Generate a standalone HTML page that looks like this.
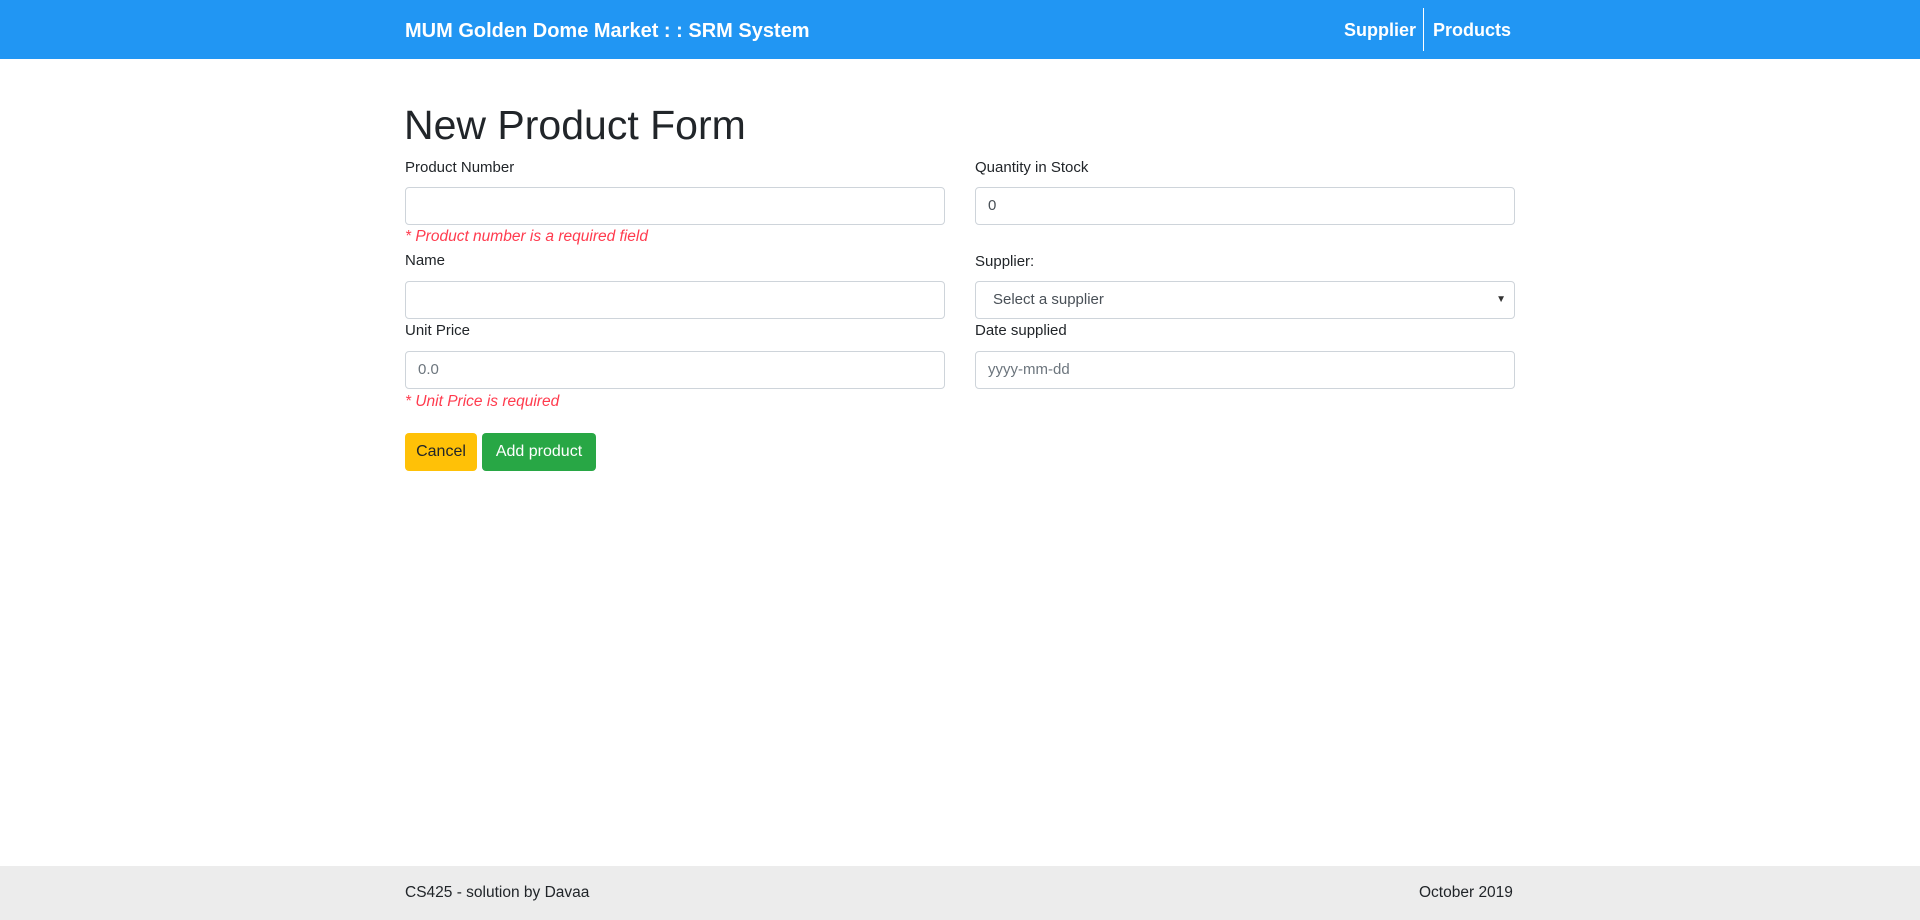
<!DOCTYPE html>
<html><head><meta charset="utf-8"><style>
*{box-sizing:border-box;margin:0;padding:0}
body{width:1920px;height:920px;position:relative;background:#fff;font-family:"Liberation Sans",sans-serif;color:#212529;font-size:16px;overflow:hidden}
.hdr{position:absolute;left:0;top:0;width:1920px;height:59px;background:#2196f3}
.a{position:absolute;white-space:nowrap}
.brand{left:405px;top:20px;color:#fff;font-weight:bold;font-size:20px}
.nav{top:20px;color:#fff;font-weight:bold;font-size:18px}
.sep{position:absolute;left:1423px;top:8px;width:1px;height:43px;background:#fff}
h1{position:absolute;left:404px;top:101px;font-size:41px;font-weight:500;line-height:48px}
.lbl{font-size:15px;line-height:20px}
.inp{position:absolute;width:540px;height:38px;border:1px solid #ced4da;border-radius:4px;font-size:15px;line-height:36px;padding-left:12px;color:#495057}
.err{color:#ff3b4e;font-style:italic;font-size:15.5px;line-height:20px}
.btn{position:absolute;top:433px;height:38px;border-radius:4px;font-size:16px;line-height:38px;text-align:center}
.foot{position:absolute;left:0;top:866px;width:1920px;height:54px;background:#ececec}
</style></head><body>
<div class="hdr"></div>
<div class="a brand">MUM Golden Dome Market : : SRM System</div>
<div class="a nav" style="left:1344px;width:71px;text-align:right">Supplier</div>
<div class="sep"></div>
<div class="a nav" style="left:1433px">Products</div>
<h1>New Product Form</h1>

<div class="a lbl" style="left:405px;top:158px">Product Number</div>
<div class="inp" style="left:405px;top:187px"></div>
<div class="a err" style="left:405px;top:227px">* Product number is a required field</div>
<div class="a lbl" style="left:405px;top:251px">Name</div>
<div class="inp" style="left:405px;top:281px"></div>
<div class="a lbl" style="left:405px;top:321px">Unit Price</div>
<div class="inp" style="left:405px;top:351px;color:#6c757d">0.0</div>
<div class="a err" style="left:405px;top:392px">* Unit Price is required</div>

<div class="a lbl" style="left:975px;top:158px">Quantity in Stock</div>
<div class="inp" style="left:975px;top:187px">0</div>
<div class="a lbl" style="left:975px;top:252px">Supplier:</div>
<div class="inp" style="left:975px;top:281px;padding-left:17px">Select a supplier<span style="position:absolute;right:8px;top:0;font-size:10px;color:#333">▼</span></div>
<div class="a lbl" style="left:975px;top:321px">Date supplied</div>
<div class="inp" style="left:975px;top:351px;color:#6c757d">yyyy-mm-dd</div>

<div class="btn" style="left:405px;width:72px;background:#ffc107;color:#212529">Cancel</div>
<div class="btn" style="left:482px;width:114px;background:#28a745;color:#fff">Add product</div>

<div class="foot"></div>
<div class="a" style="left:405px;top:884px;font-size:15.5px">CS425 - solution by Davaa</div>
<div class="a" style="left:1419px;top:884px;font-size:15.5px">October 2019</div>
</body></html>
